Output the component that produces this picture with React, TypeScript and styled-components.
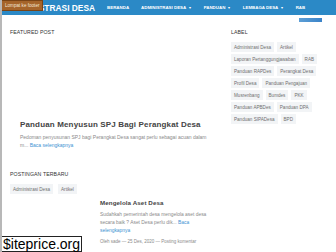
import React from "react";
import styled, { createGlobalStyle } from "styled-components";

const colors = {
    header: "#2b89c6",
    text: "#444444",
    muted: "#8a8a8a",
    link: "#3d92d2",
    tag: "#f2f4f6",
    tagText: "#6f6f6f",
};

const GlobalStyle = createGlobalStyle`
    html, body {
        margin: 0;
        padding: 0;
        background: #ffffff;
        font-family: "Liberation Sans", Arial, sans-serif;
    }
`;

const Page = styled.div`
    position: relative;
    width: 334px;
    height: 252px;
    overflow: hidden;
    border-left: 2px solid #b8b8b8;
    background: #ffffff;
`;

const Header = styled.header`
    position: relative;
    display: flex;
    align-items: center;
    height: 15px;
    padding-left: 7px;
    background: ${colors.header};
`;

const SkipLink = styled.a`
    position: absolute;
    left: -1px;
    top: 0;
    display: flex;
    align-items: center;
    height: 9px;
    padding: 0 3px;
    background: #a5642a;
    border: 1px solid #7a4415;
    color: #f3e6d8;
    font-size: 4.6px;
    text-decoration: none;
`;

const SiteTitle = styled.div`
    color: #ffffff;
    font-size: 8.4px;
    font-weight: 700;
    white-space: nowrap;
`;

const Nav = styled.nav`
    display: flex;
    align-items: center;
    gap: 12px;
    margin-left: 12px;
`;

const NavItem = styled.span`
    color: #ffffff;
    font-size: 4.4px;
    font-weight: 700;
    white-space: nowrap;
`;

const Caret = styled.span`
    margin-left: 2px;
    font-size: 3.5px;
`;

const NavMarker = styled.div`
    position: absolute;
    left: 297px;
    top: 18px;
    width: 23px;
    height: 4px;
    background: linear-gradient(90deg, #5d9fd6, #3a83c8);
`;

const Layout = styled.div`
    display: grid;
    grid-template-columns: 224px 1fr;
`;

const Main = styled.main`
    padding: 14px 0 0 8px;
`;

const Sidebar = styled.aside`
    padding: 14px 10px 0 5px;
`;

const SectionTitle = styled.h2`
    margin: 0;
    color: #333333;
    font-size: 5.2px;
    font-weight: 400;
    letter-spacing: 0.1px;
    text-transform: uppercase;
`;

const Featured = styled.article`
    height: 114px;
    display: flex;
    flex-direction: column;
    justify-content: flex-end;
    padding: 0 10px;
`;

const FeaturedTitle = styled.h1`
    margin: 0 0 4px;
    color: ${colors.text};
    font-size: 8px;
    font-weight: 700;
    letter-spacing: 0.15px;
`;

const Snippet = styled.p<{ $size?: number; $width?: number }>`
    margin: 0;
    max-width: ${({ $width }) => ($width ? `${$width}px` : "none")};
    color: ${colors.muted};
    font-size: ${({ $size }) => $size ?? 4.7}px;
    line-height: ${({ $size }) => ($size ?? 4.7) * 1.65}px;
`;

const ReadMore = styled.a`
    color: ${colors.link};
    text-decoration: none;
`;

const Latest = styled.section`
    margin-top: 22px;
`;

const TagList = styled.div<{ $gap: number }>`
    display: flex;
    flex-wrap: wrap;
    gap: 2px ${({ $gap }) => $gap}px;
    margin-top: 7px;
`;

const Tag = styled.span`
    display: inline-flex;
    align-items: center;
    height: 10px;
    padding: 0 3px;
    background: ${colors.tag};
    color: ${colors.tagText};
    font-size: 4.6px;
    white-space: nowrap;
`;

const PostRow = styled.article`
    display: grid;
    grid-template-columns: 82px 1fr;
    gap: 8px;
    margin-top: 5px;
`;

const Thumb = styled.div`
    height: 50px;
    background: #ffffff;
`;

const PostBody = styled.div`
    padding-right: 10px;
`;

const PostTitle = styled.h3`
    margin: 0 0 5px;
    color: ${colors.text};
    font-size: 6.2px;
    font-weight: 700;
    letter-spacing: 0.1px;
`;

const Meta = styled.div`
    margin-top: 4px;
    color: ${colors.muted};
    font-size: 4.5px;
`;

const Watermark = styled.div`
    position: absolute;
    left: -2px;
    bottom: 0;
    padding: 0 1px 0 2px;
    background: #ffffff;
    border: 1px solid #222222;
    color: #000000;
    font-size: 14px;
    line-height: 14px;
`;

const labels = [
    "Administrasi Desa",
    "Artikel",
    "Laporan Pertanggungjawaban",
    "RAB",
    "Panduan RAPDes",
    "Perangkat Desa",
    "Profil Desa",
    "Panduan Pengajuan",
    "Musrenbang",
    "Bumdes",
    "PKK",
    "Panduan APBDes",
    "Panduan DPA",
    "Panduan SIPADesa",
    "BPD",
];

const menu = [
    { label: "BERANDA", dropdown: false },
    { label: "ADMINISTRASI DESA", dropdown: true },
    { label: "PANDUAN", dropdown: true },
    { label: "LEMBAGA DESA", dropdown: true },
    { label: "RAB", dropdown: false },
];

const App = () => (
    <>
        <GlobalStyle />
        <Page>
            <Header>
                <SkipLink href="#footer">Lompat ke footer</SkipLink>
                <SiteTitle>ADMINISTRASI DESA</SiteTitle>
                <Nav>
                    {menu.map((item) => (
                        <NavItem key={item.label}>
                            {item.label}
                            {item.dropdown && <Caret>▼</Caret>}
                        </NavItem>
                    ))}
                </Nav>
            </Header>
            <NavMarker />
            <Layout>
                <Main>
                    <SectionTitle>Featured Post</SectionTitle>
                    <Featured>
                        <FeaturedTitle>Panduan Menyusun SPJ Bagi Perangkat Desa</FeaturedTitle>
                        <Snippet $size={5} $width={196}>
                            Pedoman penyusunan SPJ bagi Perangkat Desa sangat perlu sebagai acuan dalam
                            m... <ReadMore href="#">Baca selengkapnya</ReadMore>
                        </Snippet>
                    </Featured>
                    <Latest>
                        <SectionTitle>Postingan Terbaru</SectionTitle>
                        <TagList $gap={5}>
                            <Tag>Administrasi Desa</Tag>
                            <Tag>Artikel</Tag>
                        </TagList>
                        <PostRow>
                            <Thumb />
                            <PostBody>
                                <PostTitle>Mengelola Aset Desa</PostTitle>
                                <Snippet $size={4.9}>
                                    Sudahkah pemerintah desa mengelola aset desa secara baik ? Aset Desa
                                    perlu dik... <ReadMore href="#">Baca selengkapnya</ReadMore>
                                </Snippet>
                                <Meta>Oleh sade — 25 Des, 2020 — Posting komentar</Meta>
                            </PostBody>
                        </PostRow>
                    </Latest>
                </Main>
                <Sidebar>
                    <SectionTitle>Label</SectionTitle>
                    <TagList $gap={3}>
                        {labels.map((label) => (
                            <Tag key={label}>{label}</Tag>
                        ))}
                    </TagList>
                </Sidebar>
            </Layout>
            <Watermark>$iteprice.org</Watermark>
        </Page>
    </>
);

export default App;
